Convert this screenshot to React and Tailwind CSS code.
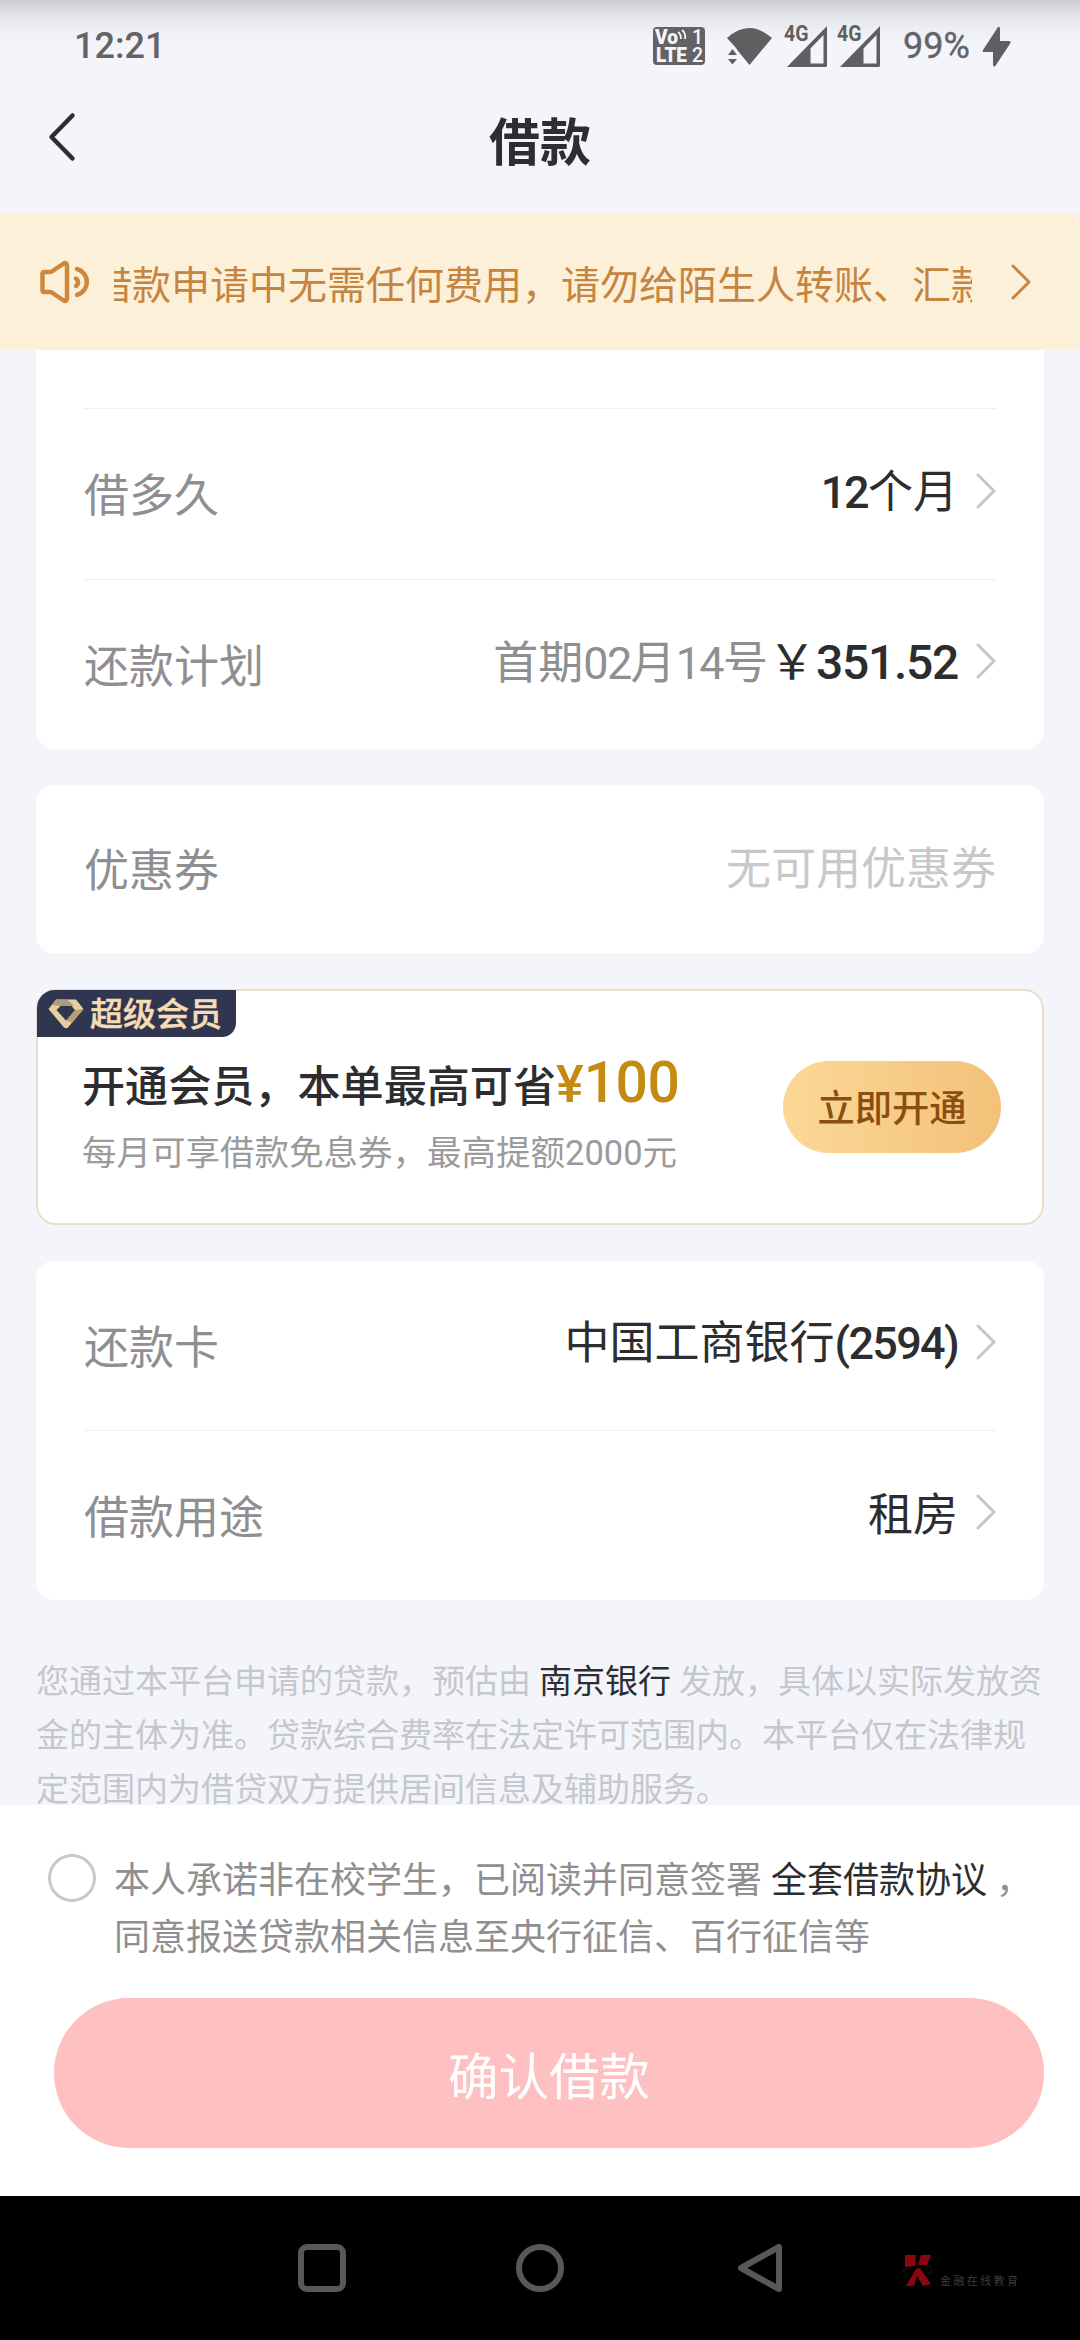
const CJK = "font-['Noto_Sans_CJK_SC',sans-serif]";

function Num({ children, className = "" }) {
  return <span className={`font-['Roboto','Noto_Sans_CJK_SC',sans-serif] ${className}`}>{children}</span>;
}

function Chevron({ className = "" }) {
  return (
    <svg className={`shrink-0 ${className}`} width="20" height="36" viewBox="0 0 20 36" fill="none">
      <path d="M2 2 L18 18 L2 34" stroke="currentColor" strokeWidth="3" strokeLinecap="round" strokeLinejoin="round" />
    </svg>
  );
}

function Signal() {
  return (
    <svg width="44" height="42" viewBox="0 0 44 42" className="overflow-visible">
      <text x="0" y="15" fontSize="21.500" fontWeight="700" fontFamily="Roboto, sans-serif" fill="#5f5f61" textLength="24.500" lengthAdjust="spacingAndGlyphs">4G</text>
      <path fillRule="evenodd" fill="#5f5f61" d="M43 0 V39.500 Q43 41 41.500 41 H3 Z M39.500 9 L26.500 22.500 V37.500 H39.500 Z" />
    </svg>
  );
}

function StatusBar() {
  return (
    <div className="flex h-[84px] items-start bg-[linear-gradient(to_bottom,#c8c9ce_0px,#d0d1d6_3px,#e2e3e8_14px,#eeeff4_30px,#f4f5fa_44px)] pl-[74px]">
      <Num className="mt-[25px] w-[578px] text-[36px] leading-[42px] font-medium text-[#646466]">12:21</Num>
      <svg className="mt-[26px] w-[54px]" width="54" height="40" viewBox="0 0 54 40">
        <rect x="1" y="1" width="52" height="38" rx="4" fill="#636365" />
        <g fill="#f4f5fa" fontFamily="Roboto, sans-serif" fontWeight="900">
          <text x="3" y="18" fontSize="19.500" textLength="23" lengthAdjust="spacingAndGlyphs">Vo</text>
          <text x="4" y="36" fontSize="20" textLength="31" lengthAdjust="spacingAndGlyphs">LTE</text>
          <text x="40" y="18" fontSize="19.500" fontWeight="500">1</text>
          <text x="40" y="36" fontSize="19.500" fontWeight="500">2</text>
        </g>
        <path d="M26 6 Q29 8 29 13 M30 4 Q34 7 33 13" stroke="#f4f5fa" strokeWidth="1.8" fill="none" />
      </svg>
      <svg className="ml-[20px] mt-[27px]" width="46" height="40" viewBox="0 0 46 40" fill="#5f5f61">
        <path d="M1 11 Q23 -9 46 11 L23.500 38 L12 24 L10 21 Z" />
        <path d="M2 28 L6.500 22 L11 28 Z M2 32 H11 L6.500 37.500 Z" />
      </svg>
      <div className="ml-[12px] mt-[26px] flex gap-[9px]">
        <Signal />
        <Signal />
      </div>
      <Num className="ml-[22px] mt-[25px] text-[36px] leading-[42px] text-[#646466] [-webkit-text-stroke:0.4px_#646466]">99%</Num>
      <svg className="ml-[12px] mt-[26px]" width="30" height="42" viewBox="0 0 30 42">
        <path d="M16 1 L1 24 Q0 26 2 26 H11 V39 Q12 42 14 39 L28.500 17 Q29 15 27 15 H18 V2 Q17 0 16 1 Z" fill="#5f5f61" />
      </svg>
    </div>
  );
}

function Row({ label, children, arrow = true, className = "" }) {
  return (
    <div className={`flex items-center justify-between text-[45px] leading-[60px] ${className}`}>
      <span className="-mt-[2px] text-[#8f8f92]">{label}</span>
      <div className="-mt-[7px] flex items-center text-[#2d2d2f]">
        <div className="whitespace-nowrap">{children}</div>
        {arrow && <Chevron className="ml-[18px] text-[#c6c6c8]" />}
      </div>
    </div>
  );
}

function Diamond() {
  return (
    <svg width="36" height="30" viewBox="0 0 36 30">
      <path d="M8 0.500 H28 L35.500 10 L20 28.500 Q18 30 16 28.500 L0.500 10 Z" fill="#e6cf9f" />
      <path d="M8 0.500 H19 L26 7 H12.500 L4 6 Z" fill="#a99a80" />
      <path d="M35.500 10 L24 23.800 L18 21.500 L27 11 Z" fill="#b79f75" />
      <path d="M12.500 7 H23.500 L27 11 L18 21.500 L8.500 11 Z" fill="#30364f" />
    </svg>
  );
}

export default function App() {
  return (
    <div className={`flex h-[2340px] w-[1080px] flex-col overflow-hidden bg-[#f4f5fa] ${CJK}`}>
      <StatusBar />
      <header className="flex h-[130px] items-start px-[48px]">
        <svg className="mt-[28px]" width="30" height="50" viewBox="0 0 30 50" fill="none">
          <path d="M24.500 3.500 L3.500 25 L24.500 46.500" stroke="#2d2d34" strokeWidth="4.500" strokeLinecap="round" strokeLinejoin="round" />
        </svg>
        <h1 className="mr-[30px] mt-[19px] flex-1 text-center text-[51px] leading-[72px] font-bold text-[#2d2d34]">借款</h1>
      </header>

      <div className="flex h-[136px] items-center bg-[#fdf0d9] pl-[38px] text-[#c58540]">
        <svg width="56" height="44" viewBox="0 0 56 44" fill="none" stroke="#cd873f" strokeWidth="4.500" strokeLinecap="round" strokeLinejoin="round">
          <path d="M6 12 H12 Q14 12 16 10 L25 4 Q29 1.500 29 6 V38 Q29 42.500 25 40 L16 34 Q14 32 12 32 H6 Q4.500 32 4.500 30 V14 Q4.500 12 6 12 Z" />
          <path d="M39 9 A 13.500 13.500 0 0 1 39 35" />
          <path d="M38 18.500 A 4.500 4.500 0 0 1 38 26" />
        </svg>
        <div className="ml-[20px] flex w-[858px] overflow-hidden">
          <span className="-ml-[21px] whitespace-nowrap text-[39px] leading-[60px]">借款申请中无需任何费用，请勿给陌生人转账、汇款</span>
        </div>
        <Chevron className="ml-[39px]" />
      </div>

      <main className="flex h-[1455px] flex-col overflow-hidden px-[36px]">
        <section className="h-[399px] shrink-0 rounded-b-[18px] bg-white px-[48px]">
          <div className="h-[59px] border-b-[1px] border-[#f0f0f2]" />
          <Row label="借多久" className="h-[171px] border-b-[1px] border-[#f0f0f2]">
            <Num className="-tracking-[2.500px] font-medium">12</Num><span className="ml-[1px]">个月</span>
          </Row>
          <Row label="还款计划" className="h-[169px]">
            <span className="text-[#8f8f92]">首期<Num className="-tracking-[1.600px]">02</Num>月<Num className="-tracking-[1.600px]">14</Num>号</span>
            <span className="text-[48px]">￥</span>
            <Num className="-tracking-[1.300px] text-[48px] font-medium">351.52</Num>
          </Row>
        </section>

        <section className="mt-[36px] h-[168px] shrink-0 rounded-[18px] bg-white px-[48px]">
          <Row label="优惠券" arrow={false} className="h-[168px]">
            <span className="text-[#c8c8ca]">无可用优惠券</span>
          </Row>
        </section>

        <section className="mt-[36px] h-[236px] shrink-0 rounded-[20px] border-2 border-[#ecdfc9] bg-white">
          <div className="-ml-px -mt-px flex h-[47px] w-[199px] items-center rounded-br-[14px] rounded-tl-[18px] bg-[#30364f] pl-[11px]">
            <Diamond />
            <span className="-mt-[4px] ml-[6px] text-[33px] leading-[46px] font-medium text-[#f6dcb4] [-webkit-text-stroke:0.4px_#f6dcb4]">超级会员</span>
          </div>
          <div className="flex items-start justify-between pl-[44px] pr-[41px]">
            <div>
              <div className="mt-[10px] h-[72px] whitespace-nowrap text-[43.100px] leading-[72px] font-medium text-[#2d2d2f]">
                开通会员，本单最高可省<Num className="text-[#c48a12]"><span className="text-[52px]">¥</span><span className="-tracking-[0.500px] text-[57px]">100</span></Num>
              </div>
              <p className="mt-[6px] text-[34.500px] leading-[50px] text-[#9b9b9d]">每月可享借款免息券，最高提额<Num>2000</Num>元</p>
            </div>
            <button className="mt-[24px] h-[92px] w-[218px] rounded-full bg-linear-to-r from-[#fcd896] to-[#f2c17a] text-[37.300px] font-medium text-[#8a4e10]">立即开通</button>
          </div>
        </section>

        <section className="mt-[36px] h-[339px] shrink-0 rounded-[18px] bg-white px-[48px]">
          <Row label="还款卡" className="h-[170px] border-b-[1px] border-[#f0f0f2]">
            中国工商银行<Num className="-tracking-[1.700px] font-medium">(2594)</Num>
          </Row>
          <Row label="借款用途" className="h-[169px]">租房</Row>
        </section>

        <p className="mt-[52px] shrink-0 whitespace-nowrap text-[33px] leading-[54px] text-[#c6c7cc]">
          您通过本平台申请的贷款，预估由<span className="mx-[8px] text-[#2d2d34]">南京银行</span>发放，具体以实际发放资<br />
          金的主体为准。贷款综合费率在法定许可范围内。本平台仅在法律规<br />
          定范围内为借贷双方提供居间信息及辅助服务。
        </p>
      </main>

      <footer className="h-[391px] bg-white">
        <div className="flex pl-[48px] pt-[45px]">
          <span className="mt-[4px] size-[48px] rounded-full border-[3px] border-[#c9c9cb]" />
          <p className="-mt-px ml-[18px] whitespace-nowrap text-[36px] leading-[57px] text-[#8f8f92]">
            本人承诺非在校学生，已阅读并同意签署<span className="mx-[9px] text-[#2d2d2f]">全套借款协议</span>，<br />
            同意报送贷款相关信息至央行征信、百行征信等
          </p>
        </div>
        <button className="ml-[54px] mt-[35px] block h-[150px] w-[990px] rounded-full bg-[#ffc0c1] pt-[2px] text-[50.500px] text-white">
          确认借款
        </button>
      </footer>

      <nav className="flex h-[144px] items-start bg-black pl-[298px] pt-[46px]">
        <svg width="48" height="52" viewBox="0 0 48 52" fill="none" stroke="#585858" strokeWidth="6">
          <rect x="3" y="5" width="42" height="42" rx="6" />
        </svg>
        <svg className="ml-[170px]" width="48" height="52" viewBox="0 0 48 52" fill="none" stroke="#585858" strokeWidth="6">
          <circle cx="24" cy="26" r="21" />
        </svg>
        <svg className="ml-[174px]" width="48" height="52" viewBox="0 0 48 52" fill="none" stroke="#585858" strokeWidth="6" strokeLinejoin="round">
          <path d="M41 5 V47 L3 26 Z" />
        </svg>
        <div className="ml-[115px] mt-[10px] flex items-end">
          <svg width="34" height="36" viewBox="0 0 34 36">
            <g fill="#8a0712">
              <path d="M4 3 H15 L14 14 L4 15 Z" />
              <path d="M20 3 H30 L26 13 H17 Z" />
              <path d="M15 17 L19 16 L30 32 L22 34 L16 24 L13 34 H5 Z" />
            </g>
            <path d="M2 20 Q4 15 9 17 M25 14 Q31 13 31 18 Q31 22 27 22" stroke="#1d1d1d" fill="none" />
          </svg>
          <span className="ml-[5px] text-[11px] leading-[16px] tracking-[2.400px] text-[#3c3c3c]">金融在线教育</span>
        </div>
      </nav>
    </div>
  );
}
